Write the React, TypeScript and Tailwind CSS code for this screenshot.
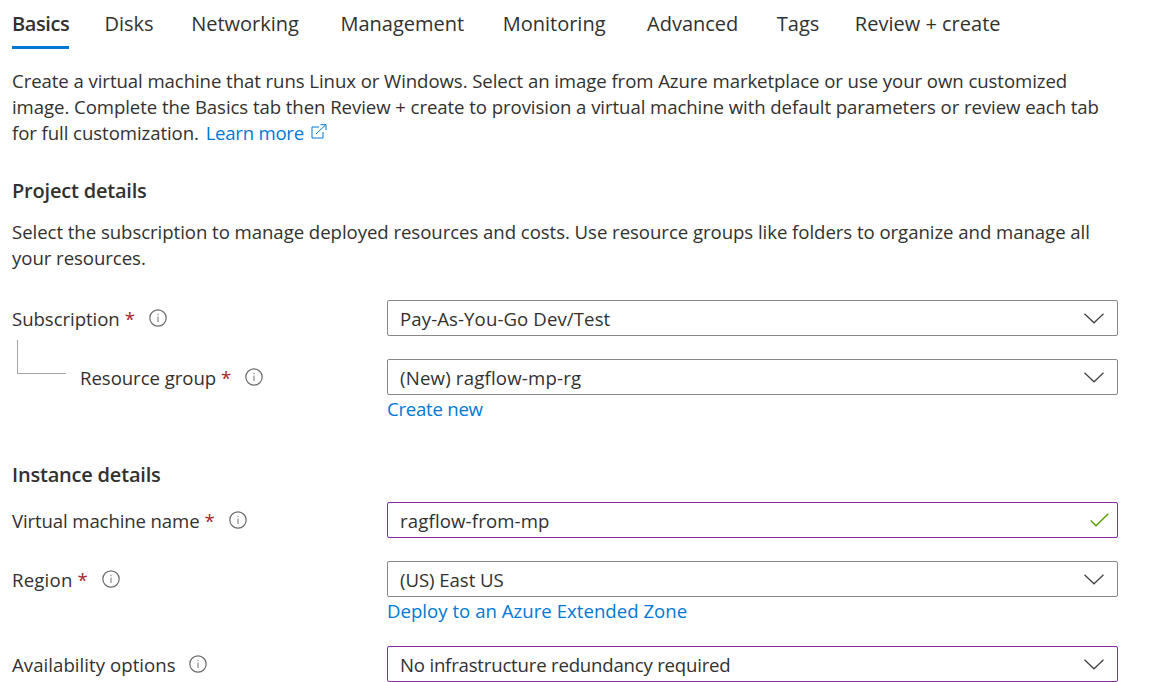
import React from 'react';

const tabs = [
  { name: 'Disks', ml: 'ml-[35.5px]' },
  { name: 'Networking', ml: 'ml-[37.5px]' },
  { name: 'Management', ml: 'ml-[41.5px]' },
  { name: 'Monitoring', ml: 'ml-[38.5px]' },
  { name: 'Advanced', ml: 'ml-[41.5px]' },
  { name: 'Tags', ml: 'ml-[38.5px]' },
  { name: 'Review + create', ml: 'ml-[35.5px]' },
];

function InfoIcon() {
  return (
    <svg width="18" height="18" viewBox="0 0 18 18" fill="none" className="shrink-0">
      <circle cx="9" cy="9" r="8.2" stroke="#6b6b6b" strokeWidth="1.2" />
      <rect x="8.4" y="7.6" width="1.2" height="5.4" fill="#8a8a8a" />
      <rect x="8.4" y="4.8" width="1.2" height="1.4" fill="#8a8a8a" />
    </svg>
  );
}

function Chevron() {
  return (
    <svg width="20" height="11" viewBox="0 0 20 11" fill="none" className="shrink-0">
      <path d="M0.5 0.8 L10 9.8 L19.5 0.8" stroke="#404040" strokeWidth="1.2" />
    </svg>
  );
}

function Check() {
  return (
    <svg width="19" height="14" viewBox="0 0 19 14" fill="none" className="shrink-0">
      <path d="M0.7 7.5 L6 12.7 L18.3 0.7" stroke="#57a300" strokeWidth="1.5" />
    </svg>
  );
}

function Label({ text, required, indent, className = '' }: { text: string; required?: boolean; indent?: boolean; className?: string }) {
  return (
    <div className={`w-[375px] shrink-0 flex items-center ${indent ? 'pl-[68px]' : ''}`}>
      <span className={`pt-[2px] ${className}`}>{text}</span>
      {required && <span className="ml-[5px] pt-[2px] text-[#a4262c]">*</span>}
      <span className={required ? 'ml-[14px]' : 'ml-[13px]'}>
        <InfoIcon />
      </span>
    </div>
  );
}

function Field({ value, active, check, className = '' }: { value: string; active?: boolean; check?: boolean; className?: string }) {
  return (
    <div className={`w-[731px] h-[36px] rounded-[2px] border flex items-center justify-between pl-[12px] ${check ? 'pr-[8px]' : 'pr-[13px]'} ${active ? 'border-[#8a2da5]' : 'border-[#8a8886]'}`}>
      <span className={`pt-[2px] ${className}`}>{value}</span>
      {check ? <Check /> : <Chevron />}
    </div>
  );
}

export default function App() {
  return (
    <div className="w-[1165px] h-[682px] overflow-hidden bg-white pl-[12px] text-[#323130] text-[18.6px] leading-[26px] font-['Open_Sans','Noto_Sans',sans-serif] tracking-[-0.05px]">
      <div className="flex h-[49px] text-[20px] tracking-normal">
        <div className="w-[57px] h-[49px] border-b-[3px] border-[#0078d4] pt-[11px] font-semibold tracking-[-0.4px] whitespace-nowrap">Basics</div>
        {tabs.map(t => (
          <div key={t.name} className={`pt-[11px] ${t.ml}`}>{t.name}</div>
        ))}
      </div>

      <p className="mt-[19px] w-[1095px] tracking-[-0.07px]">
        Create a virtual machine that runs Linux or Windows. Select an image from Azure marketplace or use your own customized image. Complete the Basics tab then Review + create to provision a virtual machine with default parameters or review each tab for full customization.{' '}
        <a className="ml-[2px] text-[#0078d4] tracking-[-0.25px]">
          Learn more
          <svg width="16" height="15" viewBox="0 0 16 15" fill="none" className="inline ml-[7px] align-[1px]">
            <path d="M8 3 H1 V14 H12 V8" stroke="#0078d4" strokeWidth="1" />
            <path d="M5 10 L14.5 1 M9.5 0.7 H15 V6" stroke="#0078d4" strokeWidth="1" />
          </svg>
        </a>
      </p>

      <h2 className="mt-[32px] font-semibold text-[20px] tracking-[-0.2px]">Project details</h2>
      <p className="mt-[15px] w-[1095px]">
        Select the subscription to manage deployed resources and costs. Use resource groups like folders to organize and manage all your resources.
      </p>

      <div className="mt-[29px] flex items-center">
        <Label text="Subscription" required />
        <Field value="Pay-As-You-Go Dev/Test" className="tracking-[0.1px]" />
      </div>

      <div className="relative mt-[23px] flex items-center">
        <div className="absolute left-[5px] top-[-19px] w-[49px] h-[34px] border-l border-b border-[#a6a6a6]" />
        <Label text="Resource group" required indent />
        <Field value="(New) ragflow-mp-rg" className="tracking-[0.2px]" />
      </div>
      <a className="block ml-[375px] mt-[1px] text-[#0078d4] tracking-[-0.25px]">Create new</a>

      <h2 className="mt-[40px] font-semibold text-[20px] tracking-[-0.2px]">Instance details</h2>

      <div className="mt-[14px] flex items-center">
        <Label text="Virtual machine name" required className="tracking-[-0.12px]" />
        <Field value="ragflow-from-mp" active check className="tracking-[0.15px]" />
      </div>

      <div className="mt-[23px] flex items-center">
        <Label text="Region" required className="tracking-[0.2px]" />
        <Field value="(US) East US" />
      </div>
      <a className="block ml-[375px] mt-[1px] text-[#0078d4] tracking-[0.02px]">Deploy to an Azure Extended Zone</a>

      <div className="mt-[22px] flex items-center">
        <Label text="Availability options" className="tracking-[0.05px]" />
        <Field value="No infrastructure redundancy required" active className="tracking-[-0.2px]" />
      </div>
    </div>
  );
}
